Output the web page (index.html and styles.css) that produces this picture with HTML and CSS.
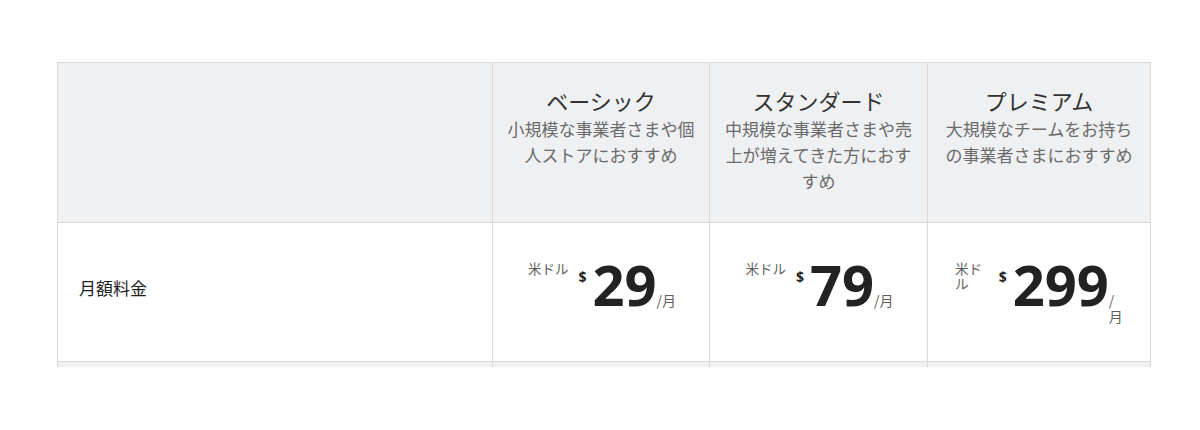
FILE: index.html
```html
<!DOCTYPE html>
<html lang="ja">
<head>
<meta charset="utf-8">
<link rel="stylesheet" href="styles.css">
</head>
<body>
<div class="wrap">
  <table class="plans">
    <colgroup>
      <col class="c-label">
      <col class="c-basic">
      <col class="c-std">
      <col class="c-prem">
    </colgroup>
    <thead>
      <tr class="head-row">
        <th class="blank"></th>
        <th class="plan">
          <div class="plan-name">ベーシック</div>
          <div class="plan-desc">小規模な事業者さまや個人ストアにおすすめ</div>
        </th>
        <th class="plan">
          <div class="plan-name">スタンダード</div>
          <div class="plan-desc">中規模な事業者さまや売上が増えてきた方におすすめ</div>
        </th>
        <th class="plan">
          <div class="plan-name">プレミアム</div>
          <div class="plan-desc">大規模なチームをお持ちの事業者さまにおすすめ</div>
        </th>
      </tr>
    </thead>
    <tbody>
      <tr class="price-row">
        <td class="label">月額料金</td>
        <td class="price-cell">
          <div class="price">
            <span class="unit">米ドル</span>
            <span class="cur">$</span>
            <span class="amount">29</span>
            <span class="per">/月</span>
          </div>
        </td>
        <td class="price-cell">
          <div class="price">
            <span class="unit">米ドル</span>
            <span class="cur">$</span>
            <span class="amount">79</span>
            <span class="per">/月</span>
          </div>
        </td>
        <td class="price-cell">
          <div class="price">
            <span class="unit">米ドル</span>
            <span class="cur">$</span>
            <span class="amount">299</span>
            <span class="per">/月</span>
          </div>
        </td>
      </tr>
      <tr class="next-row">
        <td></td><td></td><td></td><td></td>
      </tr>
    </tbody>
  </table>
</div>
</body>
</html>
```

FILE: styles.css
```css
html, body {
  margin: 0;
  padding: 0;
  background: #ffffff;
}

body {
  font-family: "Noto Sans CJK JP", "Noto Sans", sans-serif;
  color: #222;
}

.wrap {
  margin: 62px 0 0 57px;
  width: 1100px;
  height: 305px;
  overflow: hidden;
}

.plans {
  width: 1093px;
  border-collapse: collapse;
  table-layout: fixed;
}

.c-label { width: 435px; }
.c-basic { width: 217px; }
.c-std { width: 218px; }
.c-prem { width: 223px; }

.plans th,
.plans td {
  border: 1px solid #d9d9d9;
  padding: 0;
}

.head-row {
  height: 160px;
  background: #eff0f2;
}

.plan {
  vertical-align: top;
  text-align: center;
  font-weight: normal;
  padding: 21px 12px 0 !important;
}

.plan-name {
  font-size: 22px;
  line-height: 32px;
  color: #333;
}

.plan-desc {
  font-size: 17px;
  line-height: 26px;
  color: #6a6a6a;
}

.price-row {
  height: 139px;
  background: #fff;
}

.label {
  vertical-align: middle;
  padding: 0 0 9px 21px !important;
  font-size: 17px;
  color: #222;
}

.price-cell {
  vertical-align: top;
  padding: 33px 25px 0 27px !important;
}

.price {
  display: flex;
  justify-content: center;
  align-items: baseline;
}

.unit {
  align-self: flex-start;
  margin-top: 5px;
  margin-right: 10px;
  font-size: 13.5px;
  line-height: 15px;
  color: #5f5f5f;
}

.cur {
  align-self: flex-start;
  margin-top: 11px;
  margin-right: 6px;
  font-family: "Open Sans", sans-serif;
  font-weight: 700;
  font-size: 14px;
  line-height: 20px;
  color: #222;
}

.amount {
  font-family: "Open Sans", sans-serif;
  font-weight: 700;
  font-size: 56px;
  line-height: 1;
  color: #222;
}

.per {
  font-size: 14px;
  line-height: 16px;
  color: #5f5f5f;
}

.next-row {
  height: 40px;
  background: #f0f0f0;
}
```
